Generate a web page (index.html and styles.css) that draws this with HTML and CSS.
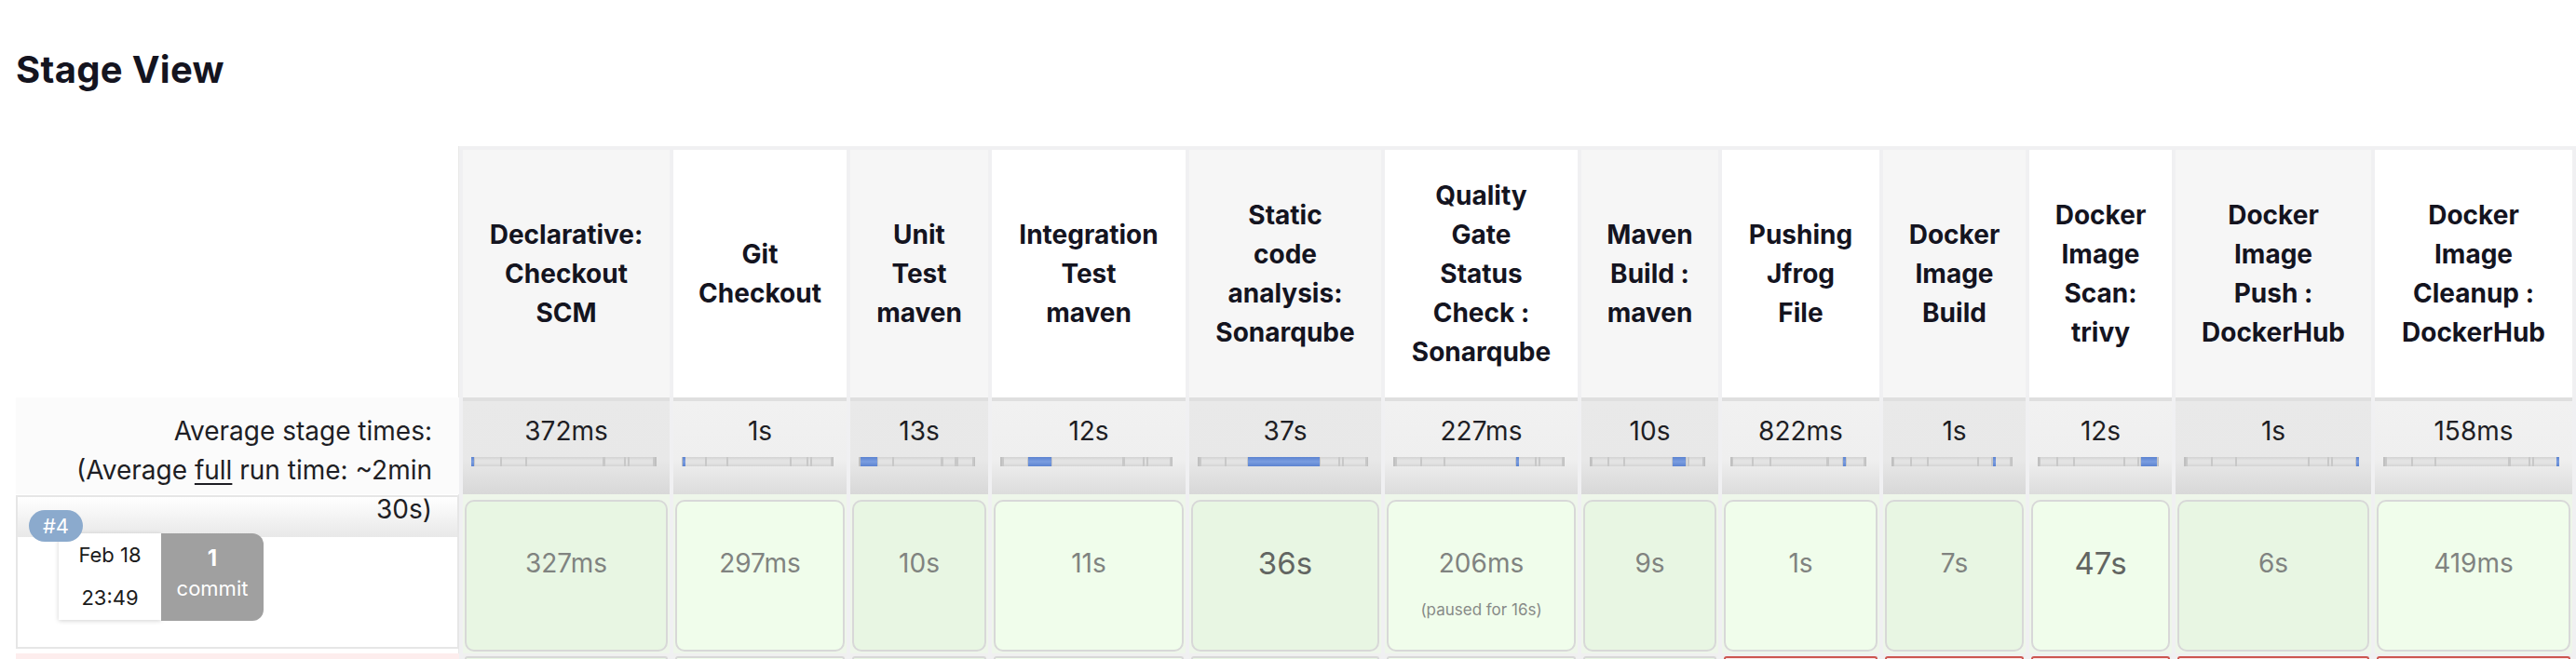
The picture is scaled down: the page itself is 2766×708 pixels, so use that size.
FILE: index.html
```html
<!DOCTYPE html>
<html lang="en">
<head>
<meta charset="utf-8">
<title>Stage View</title>
<link rel="stylesheet" href="styles.css">
</head>
<body>
<div class="page">
  <h2 class="title">Stage View</h2>
  <div class="stage-view">
    <div class="labels">
      <div class="lbl-head"></div>
      <div class="lbl-avg">Average stage times:<br>(Average <u>full</u> run time: ~2min<br>30s)</div>
      <div class="build">
        <span class="badge">#4</span>
        <div class="build-card">
          <div class="date">Feb 18<br>23:49</div>
          <div class="commits"><b>1</b><span>commit</span></div>
        </div>
      </div>
      <div class="build failed"></div>
    </div>

    <div class="stages">
      <div class="row head">
        <div class="cell">Declarative:<br>Checkout<br>SCM</div>
        <div class="cell">Git<br>Checkout</div>
        <div class="cell">Unit<br>Test<br>maven</div>
        <div class="cell">Integration<br>Test<br>maven</div>
        <div class="cell">Static<br>code<br>analysis:<br>Sonarqube</div>
        <div class="cell">Quality<br>Gate<br>Status<br>Check :<br>Sonarqube</div>
        <div class="cell">Maven<br>Build :<br>maven</div>
        <div class="cell">Pushing<br>Jfrog<br>File</div>
        <div class="cell">Docker<br>Image<br>Build</div>
        <div class="cell">Docker<br>Image<br>Scan:<br>trivy</div>
        <div class="cell">Docker<br>Image<br>Push :<br>DockerHub</div>
        <div class="cell">Docker<br>Image<br>Cleanup :<br>DockerHub</div>
      </div>

      <div class="row avg">
        <div class="cell"><div class="val">372ms</div><div class="bar"><i style="left:0%;width:0.42%"></i></div></div>
        <div class="cell"><div class="val">1s</div><div class="bar"><i style="left:0.42%;width:1.13%"></i></div></div>
        <div class="cell"><div class="val">13s</div><div class="bar"><i style="left:1.55%;width:14.68%"></i></div></div>
        <div class="cell"><div class="val">12s</div><div class="bar"><i style="left:16.23%;width:13.55%"></i></div></div>
        <div class="cell"><div class="val">37s</div><div class="bar"><i style="left:29.78%;width:41.77%"></i></div></div>
        <div class="cell"><div class="val">227ms</div><div class="bar"><i style="left:71.55%;width:0.26%"></i></div></div>
        <div class="cell"><div class="val">10s</div><div class="bar"><i style="left:71.81%;width:11.29%"></i></div></div>
        <div class="cell"><div class="val">822ms</div><div class="bar"><i style="left:83.1%;width:0.93%"></i></div></div>
        <div class="cell"><div class="val">1s</div><div class="bar"><i style="left:84.03%;width:1.13%"></i></div></div>
        <div class="cell"><div class="val">12s</div><div class="bar"><i style="left:85.16%;width:13.55%"></i></div></div>
        <div class="cell"><div class="val">1s</div><div class="bar"><i style="left:98.7%;width:1.13%"></i></div></div>
        <div class="cell"><div class="val">158ms</div><div class="bar"><i style="left:98.6%;width:0.17%"></i></div></div>
      </div>

      <div class="row run">
        <div class="cell"><div class="box"><div class="dur">327ms</div></div></div>
        <div class="cell"><div class="box"><div class="dur">297ms</div></div></div>
        <div class="cell"><div class="box"><div class="dur">10s</div></div></div>
        <div class="cell"><div class="box"><div class="dur">11s</div></div></div>
        <div class="cell"><div class="box"><div class="dur long">36s</div></div></div>
        <div class="cell"><div class="box"><div class="dur">206ms</div><div class="paused">(paused for 16s)</div></div></div>
        <div class="cell"><div class="box"><div class="dur">9s</div></div></div>
        <div class="cell"><div class="box"><div class="dur">1s</div></div></div>
        <div class="cell"><div class="box"><div class="dur">7s</div></div></div>
        <div class="cell"><div class="box"><div class="dur long">47s</div></div></div>
        <div class="cell"><div class="box"><div class="dur">6s</div></div></div>
        <div class="cell"><div class="box"><div class="dur">419ms</div></div></div>
      </div>

      <div class="row next">
        <div class="cell"><div class="cap"></div></div>
        <div class="cell"><div class="cap"></div></div>
        <div class="cell"><div class="cap"></div></div>
        <div class="cell"><div class="cap"></div></div>
        <div class="cell"><div class="cap"></div></div>
        <div class="cell"><div class="cap"></div></div>
        <div class="cell"><div class="cap"></div></div>
        <div class="cell"><div class="cap fail"></div></div>
        <div class="cell"><div class="cap fail"></div></div>
        <div class="cell"><div class="cap fail"></div></div>
        <div class="cell"><div class="cap fail"></div></div>
        <div class="cell"><div class="cap fail"></div></div>
      </div>
    </div>
  </div>
</div>
</body>
</html>
```

FILE: styles.css
```css
* { box-sizing: border-box; }

html, body {
  margin: 0;
  background: #fff;
  font-family: Inter, "Noto Sans", "Liberation Sans", sans-serif;
  color: #14141f;
}

body { height: 708px; overflow: hidden; }

.page {
  padding: 51px 0 0 17px;
}

.title {
  margin: 0;
  font-size: 40px;
  line-height: 48px;
  font-weight: 700;
  letter-spacing: 0.3px;
  color: #14141f;
}

.stage-view {
  margin-top: 58px;
  display: flex;
  align-items: flex-start;
}

/* ---------- left label column ---------- */
.labels {
  width: 476px;
  flex: none;
  display: flex;
  flex-direction: column;
}

.lbl-head { height: 270px; }

.lbl-avg {
  position: relative;
  z-index: 2;
  height: 104px;
  padding: 15px 29px 0 0;
  background: #fbfbfb;
  text-align: right;
  font-size: 28px;
  line-height: 42px;
  color: #1e1e24;
}

.lbl-avg u { text-underline-offset: 4px; text-decoration-thickness: 2px; }

.build {
  position: relative;
  margin-top: 1px;
  height: 165px;
  border: 2px solid #e6e6e6;
  background: linear-gradient(#ffffff, #e8e8e8) 0 0 / 100% 43px no-repeat, #fff;
}

.build.failed {
  margin-top: 5px;
  height: 6px;
  border: none;
  background: #fdeded;
}

.badge {
  position: absolute;
  left: 12px;
  top: 14px;
  z-index: 1;
  width: 58px;
  height: 34px;
  border-radius: 17px;
  background: #8baacd;
  color: #fff;
  font-size: 22px;
  line-height: 34px;
  text-align: center;
}

.build-card {
  display: flex;
  margin: 39px 0 0 44px;
}

.date {
  width: 110px;
  height: 93px;
  background: #fff;
  box-shadow: 0 1px 5px rgba(0, 0, 0, 0.18);
  text-align: center;
  font-size: 22px;
  line-height: 46px;
  color: #1b1b1b;
}

.commits {
  width: 110px;
  height: 94px;
  padding-top: 10px;
  background: #a0a0a0;
  border-radius: 0 12px 12px 0;
  color: #fff;
  text-align: center;
  display: flex;
  flex-direction: column;
}

.commits b { font-size: 24px; line-height: 34px; font-weight: 700; }
.commits span { font-size: 22px; line-height: 30px; }

/* ---------- stage grid ---------- */
.stages {
  flex: none;
  display: grid;
  grid-template-columns: 222px 186px 148px 208px 206px 207px 147px 169px 153px 153px 210px 212px;
  grid-template-rows: 266px 104px 171px 6px;
  column-gap: 4px;
  padding: 4px 4px 0;
  background: #f0f0f2;
  border-left: 1px solid #e8e8e8;
  margin-left: -1px;
}

.row { display: contents; }

.head .cell {
  display: flex;
  align-items: center;
  justify-content: center;
  text-align: center;
  font-size: 28px;
  line-height: 42px;
  font-weight: 700;
  color: #14141f;
  background: #f6f6f6;
}
.head .cell:nth-child(even) { background: #fff; }

.avg .cell {
  border-top: 4px solid #dfdfdf;
  padding: 15px 14px 0 9px;
  background: linear-gradient(#e9e9e9, #e8e8e8 62%, #d8d8d8);
  text-align: center;
}
.avg .cell:nth-child(even) {
  background: linear-gradient(#f1f1f1, #efefef 62%, #dcdcdc);
}

.val {
  font-size: 28px;
  line-height: 34px;
  color: #1e1e24;
  padding-left: 5px;
}

.bar {
  position: relative;
  height: 10px;
  margin-top: 11px;
  background:
    linear-gradient(90deg, #c0c0c0 0 2px, transparent 2px calc(1.55% - 1px), #c8c8c8 calc(1.55% - 1px) calc(1.55% + 1px), transparent calc(1.55% + 1px)),
    linear-gradient(90deg, transparent calc(16.23% - 1px), #c8c8c8 calc(16.23% - 1px) calc(16.23% + 1px), transparent calc(16.23% + 1px)),
    linear-gradient(90deg, transparent calc(29.78% - 1px), #c8c8c8 calc(29.78% - 1px) calc(29.78% + 1px), transparent calc(29.78% + 1px)),
    linear-gradient(90deg, transparent calc(71.55% - 1px), #c8c8c8 calc(71.55% - 1px) calc(71.81% + 1px), transparent calc(71.81% + 1px)),
    linear-gradient(90deg, transparent calc(83.1% - 1px), #c8c8c8 calc(83.1% - 1px) calc(83.1% + 1px), transparent calc(83.1% + 1px)),
    linear-gradient(90deg, transparent calc(85.16% - 1px), #c8c8c8 calc(85.16% - 1px) calc(85.16% + 1px), transparent calc(85.16% + 1px)),
    linear-gradient(90deg, transparent calc(98.7% - 1px), #c8c8c8 calc(98.7% - 1px) calc(98.7% + 1px), transparent calc(98.7% + 1px)),
    linear-gradient(90deg, transparent calc(100% - 2px), #c0c0c0 calc(100% - 2px)),
    linear-gradient(#d3d3d3, #e3e3e3 35%, #e3e3e3 65%, #d3d3d3);
}

.bar i {
  position: absolute;
  top: 0;
  bottom: 0;
  min-width: 3px;
  background: linear-gradient(#5c83d0, #7a9de0 50%, #5c83d0);
}

.run .cell {
  padding: 6px 2px 2px;
  background: #eef6ea;
}

.box {
  height: 100%;
  border: 2px solid #d8d8d8;
  border-radius: 10px;
  background: #e8f6e3;
  text-align: center;
  padding-top: 46px;
}
.run .cell:nth-child(even) .box { background: #f0fdeb; }

.next .cell {
  padding: 3px 2px 0;
  background: #f0f0f0;
}

.cap {
  height: 100%;
  border: 2px solid #d8d8d8;
  border-bottom: none;
  border-radius: 10px 10px 0 0;
  background: #e8f6e3;
}
.next .cell:nth-child(even) .cap { background: #f0fdeb; }
.cap.fail { border-color: #cc5550; background: #fbe6e6; }
.next .cell:nth-child(even) .cap.fail { background: #fbe6e6; }

.dur {
  font-size: 28px;
  line-height: 40px;
  color: #808380;
}
.dur.long {
  font-size: 33px;
  color: #626562;
}

.paused {
  margin-top: 15px;
  font-size: 17px;
  line-height: 30px;
  color: #878a87;
}
```
